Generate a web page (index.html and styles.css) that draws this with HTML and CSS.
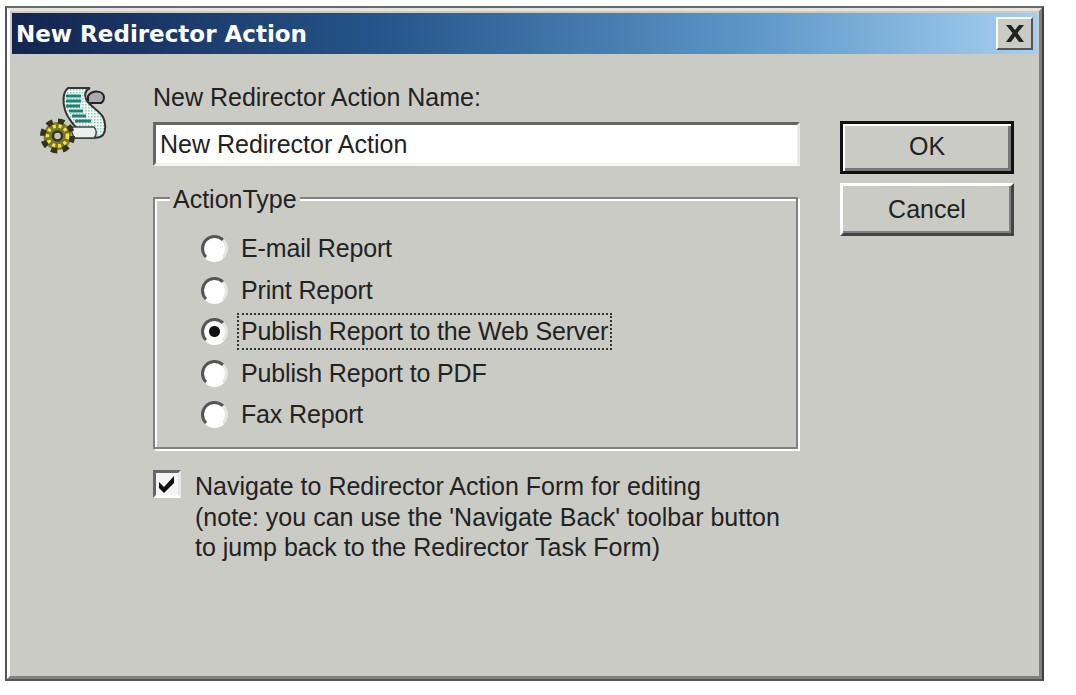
FILE: index.html
```html
<!DOCTYPE html>
<html lang="en">
<head>
  <meta charset="UTF-8">
  <meta name="viewport" content="width=device-width, initial-scale=1.0">
  <title>New Redirector Action</title>
  <link rel="stylesheet" href="styles.css">
</head>
<body>
  <div class="window">
    <div class="window-inner">
      <div class="titlebar">
        <span class="title-text">New Redirector Action</span>
        <button class="close-btn" aria-label="Close">
          <svg width="20" height="17" viewBox="0 0 20 17"><path d="M1 0h5l4 5 4-5h5l-6.500 8 6.500 9h-5l-4-5.500-4 5.500h-5l6.500-9z" fill="#222"/></svg>
        </button>
      </div>

      <div class="content">
        <div class="icon-col">
          <!-- scroll with gear -->
          <svg width="68" height="68" viewBox="0 0 68 68">
            <defs>
              <pattern id="dither" width="3" height="3" patternUnits="userSpaceOnUse">
                <rect width="3" height="3" fill="#f2f8f6"/>
                <rect width="1.500" height="1.500" fill="#8cc6bc"/>
              </pattern>
            </defs>
            <path d="M48 10c4-6 15-6 16 1 0 3-1 5-3 6H48z" fill="#a9a9b0" stroke="#222" stroke-width="2"/>
            <path d="M28 2h22c-4 2-6 6-4 11 3 7 12 10 17 18 3 6 3 14 0 18-3 3-7 3-11 3H36c3-4 2-9-2-13-3-4-7-8-9-15-2-6-3-17 3-22z" fill="url(#dither)" stroke="#333" stroke-width="2"/>
            <path d="M26 10h15M26 15h15M26 20h14M29 25h14M32 30h14M35 35h16" stroke="#1f8270" stroke-width="2.800"/>
            <path d="M30 41h24c3 3 3 8 0 11H34z" fill="#e9efec" stroke="#444" stroke-width="1.500"/>
            <circle cx="17.500" cy="50" r="14" fill="#7f7f34" stroke="#34341a" stroke-width="7" stroke-dasharray="6 5"/>
            <circle cx="17.500" cy="50" r="12" fill="#77772c"/>
            <circle cx="17.500" cy="50" r="10" fill="none" stroke="#f4e63c" stroke-width="3.500" stroke-dasharray="3 3"/>
            <circle cx="17.500" cy="50" r="4.500" fill="#c8c8a8" stroke="#333" stroke-width="2.500"/>
          </svg>
        </div>

        <div class="main-col">
          <label class="field-label" for="actionName">New Redirector Action Name:</label>
          <input class="name-input" id="actionName" type="text" value="New Redirector Action">

          <div class="group">
            <span class="group-title">ActionType</span>
            <label class="radio-row"><input type="radio" name="actionType"><span>E-mail Report</span></label>
            <label class="radio-row"><input type="radio" name="actionType"><span>Print Report</span></label>
            <label class="radio-row"><input type="radio" name="actionType" checked><span class="focused">Publish Report to the Web Server</span></label>
            <label class="radio-row"><input type="radio" name="actionType"><span>Publish Report to PDF</span></label>
            <label class="radio-row"><input type="radio" name="actionType"><span>Fax Report</span></label>
          </div>

          <label class="check-row">
            <span class="check-box">
              <svg width="20" height="18" viewBox="0 0 20 18"><path d="M2 7l5 5L17 1v7L7 18 2 13z" fill="#111"/></svg>
            </span>
            <span class="check-text">Navigate to Redirector Action Form for editing<br>(note: you can use the 'Navigate Back' toolbar button<br>to jump back to the Redirector Task Form)</span>
          </label>
        </div>

        <div class="button-col">
          <button class="btn btn-default">OK</button>
          <button class="btn">Cancel</button>
        </div>
      </div>
    </div>
  </div>
</body>
</html>
```

FILE: styles.css
```css
body {
  margin: 0;
  background: #fff;
  color: #222;
  font-family: "Liberation Sans", Arial, sans-serif;
  font-size: 25px;
}

.window {
  width: 1039px;
  height: 675px;
  margin: 6px 0 0 5px;
  box-sizing: border-box;
  border: 2px solid #555;
  border-color: #6a6a6a #404040 #555 #555;
  background: #cbcbc6;
}

.window-inner {
  height: 100%;
  box-sizing: border-box;
  padding: 2px;
  border-style: solid;
  border-width: 3px;
  border-color: #e4e4e0 #808080 #808080 #fff;
}

.titlebar {
  display: flex;
  align-items: center;
  justify-content: space-between;
  height: 41px;
  padding: 0 4px;
  background: linear-gradient(to right, #14244f, #245489 35%, #5c97c8 72%, #a5cff0);
}

.title-text {
  color: #fff;
  font-family: "DejaVu Sans", Verdana, sans-serif;
  font-weight: bold;
  font-size: 23px;
}

.close-btn {
  display: flex;
  align-items: center;
  justify-content: center;
  width: 37px;
  height: 33px;
  padding: 0;
  background: #cbcbc6;
  border: 2px solid;
  border-color: #fff #555 #555 #fff;
}

.content {
  display: flex;
  padding: 28px 0 0 28px;
}

.icon-col {
  width: 113px;
  padding-top: 4px;
}

.main-col {
  width: 647px;
  margin-right: 40px;
}

.field-label {
  display: block;
  line-height: 30px;
  margin-bottom: 10px;
}

.name-input {
  display: block;
  width: 100%;
  height: 44px;
  box-sizing: border-box;
  padding: 0 4px;
  border: 3px solid;
  border-color: #666 #e8e8e8 #f4f4f4 #666;
  background: #fff;
  color: #222;
  font: inherit;
}

.group {
  position: relative;
  width: 645px;
  height: 252px;
  box-sizing: border-box;
  margin-top: 31px;
  padding: 29px 0 0 46px;
  border: 2px solid #808080;
  box-shadow: inset 2px 2px 0 #fff, 2px 2px 0 #fff;
}

.group-title {
  position: absolute;
  top: -15px;
  left: 15px;
  padding: 0 3px;
  background: #cbcbc6;
  line-height: 30px;
}

.radio-row {
  display: flex;
  align-items: center;
  height: 41.500px;
  letter-spacing: -0.15px;
}

.radio-row input {
  appearance: none;
  flex: none;
  width: 27px;
  height: 27px;
  box-sizing: border-box;
  margin: 0 13px 0 0;
  border-radius: 50%;
  border: 3px solid;
  border-color: #555 #e6e6e2 #fff #555;
  background: #fff;
}

.radio-row input:checked {
  background: radial-gradient(circle, #111 5px, #fff 6px);
}

.focused {
  outline: 2px dotted #333;
  outline-offset: 2px;
}

.check-row {
  display: flex;
  margin-top: 21px;
}

.check-box {
  display: flex;
  align-items: center;
  justify-content: center;
  flex: none;
  width: 28px;
  height: 28px;
  box-sizing: border-box;
  margin-right: 14px;
  border: 3px solid;
  border-color: #666 #e8e8e8 #fff #666;
  background: #f4f4f4;
}

.check-text {
  margin-top: 1px;
  line-height: 30.500px;
}

.button-col {
  display: flex;
  flex-direction: column;
  gap: 9px;
  width: 174px;
  margin-top: 39px;
}

.btn {
  height: 53px;
  padding: 0;
  border: 3px solid;
  border-color: #fff #444 #444 #fff;
  box-shadow: inset -2px -2px 0 #808080;
  background: #cbcbc6;
  color: #222;
  font: inherit;
}

.btn-default {
  padding-bottom: 3px;
  border-color: #111;
  box-shadow: inset 2px 2px 0 #fff, inset -3px -3px 0 #777;
}
```
